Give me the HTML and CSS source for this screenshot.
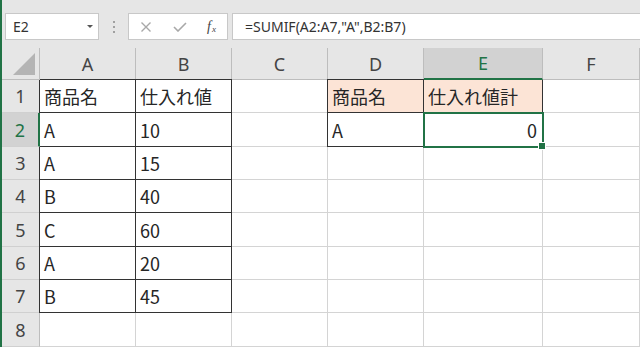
FILE: index.html
```html
<!DOCTYPE html>
<html lang="ja">
<head>
<meta charset="utf-8">
<title>SUMIF</title>
<link rel="stylesheet" href="styles.css">
</head>
<body>
<div class="app">
  <div class="toolbar">
    <div class="namebox"><span class="name">E2</span><span class="caret"></span></div>
    <div class="grip"><i></i><i></i><i></i></div>
    <div class="fxbox">
      <svg class="ico x" width="12" height="10" viewBox="0 0 12 10"><path d="M1.5 0.5L10.5 9.5M10.5 0.5L1.5 9.5" stroke="#a8a8a8" stroke-width="1.4" fill="none"/></svg>
      <svg class="ico ok" width="14" height="10" viewBox="0 0 14 10"><path d="M1 5L5 9L13 1" stroke="#a8a8a8" stroke-width="1.6" fill="none"/></svg>
      <span class="fx"><span class="f">f</span><span class="xx">x</span></span>
    </div>
    <div class="formula">=SUMIF(A2:A7,"A",B2:B7)</div>
  </div>
  <div class="sheet">
    <div class="corner"><span class="tri"></span></div>
    <div class="ch">A</div>
    <div class="ch">B</div>
    <div class="ch">C</div>
    <div class="ch">D</div>
    <div class="ch active">E</div>
    <div class="ch">F</div>

    <div class="rh">1</div>
    <div class="c b btl">商品名</div>
    <div class="c b bt">仕入れ値</div>
    <div class="c"></div>
    <div class="c b btl peach">商品名</div>
    <div class="c b peach">仕入れ値計</div>
    <div class="c"></div>

    <div class="rh active">2</div>
    <div class="c b">A</div>
    <div class="c b">10</div>
    <div class="c"></div>
    <div class="c b bl">A</div>
    <div class="c b sel num">0</div>
    <div class="c"></div>

    <div class="rh">3</div>
    <div class="c b bl">A</div>
    <div class="c b">15</div>
    <div class="c"></div>
    <div class="c"></div>
    <div class="c"></div>
    <div class="c"></div>

    <div class="rh">4</div>
    <div class="c b bl">B</div>
    <div class="c b">40</div>
    <div class="c"></div>
    <div class="c"></div>
    <div class="c"></div>
    <div class="c"></div>

    <div class="rh">5</div>
    <div class="c b bl">C</div>
    <div class="c b">60</div>
    <div class="c"></div>
    <div class="c"></div>
    <div class="c"></div>
    <div class="c"></div>

    <div class="rh">6</div>
    <div class="c b bl">A</div>
    <div class="c b">20</div>
    <div class="c"></div>
    <div class="c"></div>
    <div class="c"></div>
    <div class="c"></div>

    <div class="rh">7</div>
    <div class="c b bl">B</div>
    <div class="c b">45</div>
    <div class="c"></div>
    <div class="c"></div>
    <div class="c"></div>
    <div class="c"></div>

    <div class="rh">8</div>
    <div class="c"></div>
    <div class="c"></div>
    <div class="c"></div>
    <div class="c"></div>
    <div class="c"></div>
    <div class="c"></div>
  </div>
</div>
</body>
</html>
```
FILE: styles.css
```css
* { box-sizing: border-box; }
html, body { margin: 0; padding: 0; }
body {
  width: 640px;
  height: 347px;
  overflow: hidden;
  background: #fff;
  font-family: "Noto Sans CJK JP", "Noto Sans", sans-serif;
}
.app {
  border-left: 2px solid #217346;
  height: 347px;
  display: flex;
  flex-direction: column;
}
.toolbar {
  height: 48px;
  flex: none;
  background: #e6e6e6;
  display: flex;
  align-items: flex-start;
  padding: 13px 0 0 3px;
  font-family: "Noto Sans", "Liberation Sans", sans-serif;
}
.namebox {
  width: 94px;
  height: 27px;
  background: #fff;
  border: 1px solid #c8c8c8;
  display: flex;
  align-items: center;
  justify-content: space-between;
  padding: 0 5px 0 7px;
  font-size: 14px;
  color: #333;
}
.caret {
  width: 0; height: 0;
  border-left: 3.5px solid transparent;
  border-right: 3.5px solid transparent;
  border-top: 3.5px solid #555;
  margin-top: -1px;
}
.grip {
  width: 29px;
  height: 27px;
  display: flex;
  flex-direction: column;
  align-items: center;
  justify-content: center;
  gap: 3px;
}
.grip i {
  width: 2px; height: 2px;
  background: #a0a0a0;
  display: block;
}
.fxbox {
  width: 100px;
  height: 27px;
  background: #fff;
  border: 1px solid #c8c8c8;
  display: flex;
  align-items: center;
  padding-left: 11px;
}
.ico { display: block; }
.ico.x { margin-right: 20px; }
.ico.ok { margin-right: 20px; margin-left: 1px; }
.fx {
  font-family: "Liberation Serif", serif;
  font-style: italic;
  color: #444;
  font-size: 14px;
  display: flex;
  align-items: flex-end;
  margin-top: 1px;
}
.fx .xx { font-size: 9px; margin-left: 1px; margin-bottom: 1px; }
.formula {
  margin-left: 4px;
  flex: 1;
  height: 27px;
  background: #fff;
  border: 1px solid #c8c8c8;
  border-right: none;
  padding-left: 12px;
  display: flex;
  align-items: center;
  font-size: 14px;
  color: #333;
}
.sheet {
  display: grid;
  grid-template-columns: 38px 96px 96px 96px 96px 119px 97px;
  grid-template-rows: 32px 33px 34px 33px 33px 34px 33px 33px 34px;
  font-size: 18px;
  color: #262626;
}
.corner {
  background: #e6e6e6;
  border-right: 1px solid #bdbdbd;
  border-bottom: 1px solid #bdbdbd;
  position: relative;
}
.tri {
  position: absolute;
  right: 4px;
  bottom: 4px;
  width: 0; height: 0;
  border-left: 22px solid transparent;
  border-bottom: 22px solid #b4b4b4;
}
.ch {
  background: #e6e6e6;
  border-right: 1px solid #bdbdbd;
  border-bottom: 1px solid #bdbdbd;
  display: flex;
  align-items: center;
  justify-content: center;
  color: #444;
  font-family: "Noto Sans", sans-serif;
  font-size: 18px;
}
.ch.active {
  background: #d2d2d2;
  color: #217346;
  border-bottom: 2px solid #217346;
}
.rh {
  background: #e6e6e6;
  border-right: 1px solid #bdbdbd;
  border-bottom: 1px solid #d0d0d0;
  display: flex;
  align-items: center;
  justify-content: center;
  color: #444;
  font-family: "Noto Sans", sans-serif;
  font-size: 18px;
}
.rh.active {
  background: #d2d2d2;
  color: #217346;
  border-right: 2px solid #217346;
}
.c {
  border-right: 1px solid #d4d4d4;
  border-bottom: 1px solid #d4d4d4;
  display: flex;
  align-items: center;
  padding-left: 4px;
  white-space: nowrap;
}
.c.b {
  border-right-color: #333;
  border-bottom-color: #333;
}
.c.bl { box-shadow: -1px 0 0 #333; }
.c.bt { box-shadow: 0 -1px 0 #333; }
.c.btl { box-shadow: -1px 0 0 #333, 0 -1px 0 #333, -1px -1px 0 #333; }
.c.peach { background: #fce4d6; }
.c.num { justify-content: flex-end; padding-right: 5px; }
.c.sel {
  position: relative;
  outline: 2px solid #217346;
  outline-offset: -1px;
}
.c.sel::after {
  content: "";
  position: absolute;
  right: -4px;
  bottom: -4px;
  width: 6px;
  height: 6px;
  background: #217346;
  border: 1px solid #fff;
}
```
